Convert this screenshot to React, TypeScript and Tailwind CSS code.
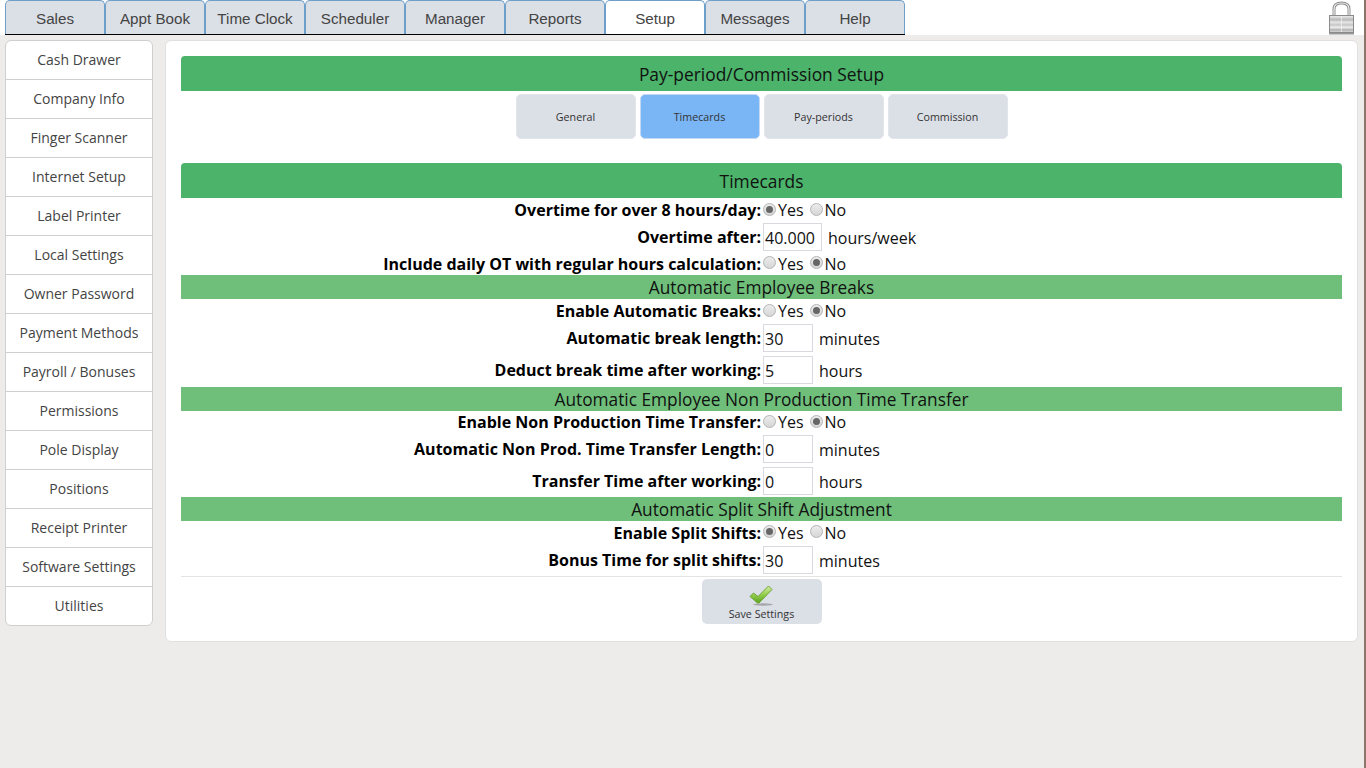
const tabs = ["Sales", "Appt Book", "Time Clock", "Scheduler", "Manager", "Reports", "Setup", "Messages", "Help"];
const sideItems = [
  "Cash Drawer", "Company Info", "Finger Scanner", "Internet Setup", "Label Printer", "Local Settings", "Owner Password",
  "Payment Methods", "Payroll / Bonuses", "Permissions", "Pole Display", "Positions", "Receipt Printer", "Software Settings", "Utilities",
];
const subTabs = ["General", "Timecards", "Pay-periods", "Commission"];

function Radio({ on }: { on: boolean }) {
  return (
    <span className="-mt-[2px] flex h-[13px] w-[13px] items-center justify-center rounded-full border border-[#b4b4b4] bg-gradient-to-b from-[#ececec] to-[#d6d6d6]">
      {on && <span className="h-[7px] w-[7px] rounded-full bg-[#666666]" />}
    </span>
  );
}

function YesNo({ label, yes, h }: { label: string; yes: boolean; h: string }) {
  return (
    <div className={`flex items-center ${h}`}>
      <div className="w-[580px] text-right font-bold text-black">{label}:</div>
      <div className="ml-[2px] flex items-center text-[#111]">
        <Radio on={yes} />
        <span className="ml-[2px]">Yes</span>
        <span className="ml-[6px] flex items-center"><Radio on={!yes} /></span>
        <span className="ml-[2px]">No</span>
      </div>
    </div>
  );
}

function InputRow({ label, value, unit, wide, h }: { label: string; value: string; unit: string; wide?: boolean; h: string }) {
  return (
    <div className={`flex items-center ${h}`}>
      <div className="w-[580px] text-right font-bold text-black">{label}:</div>
      <div className={`ml-[2px] flex h-[28px] items-center border border-[#d8d8de] pl-[1px] pt-[1px] text-[#111] ${wide ? "w-[59px]" : "w-[50px]"}`}>{value}</div>
      <span className="ml-[6px] pt-[1px] text-[#111]">{unit}</span>
    </div>
  );
}

function SubHeader({ title }: { title: string }) {
  return <div className="flex h-[24px] items-center justify-center bg-[#6fbf7b] pt-[1px] text-[17.3px] text-[#111]">{title}</div>;
}

function MainHeader({ title }: { title: string }) {
  return <div className="flex h-[35px] items-center justify-center rounded-t-[4px] bg-[#4bb36a] pt-[1px] text-[17.4px] text-[#111]">{title}</div>;
}

function Lock() {
  return (
    <svg width="26" height="34" viewBox="0 0 26 34">
      <defs>
        <linearGradient id="lockBody" x1="0" y1="0" x2="0" y2="1">
          <stop offset="0" stopColor="#f0f0f0" />
          <stop offset="0.25" stopColor="#b9b9b9" />
          <stop offset="0.4" stopColor="#e6e6e6" />
          <stop offset="0.55" stopColor="#c6c6c6" />
          <stop offset="0.7" stopColor="#ececec" />
          <stop offset="0.85" stopColor="#b0b0b0" />
          <stop offset="1" stopColor="#e0e0e0" />
        </linearGradient>
      </defs>
      <path d="M5 15V8c0-4 3-6 7.500-6s7.500 2 7.500 6v7" fill="none" stroke="#8e8e8e" strokeWidth="3" />
      <path d="M5 15V8c0-4 3-6 7.500-6s7.500 2 7.500 6v7" fill="none" stroke="#ececec" strokeWidth="1.200" />
      <rect x="0.5" y="14.500" width="24" height="17" fill="url(#lockBody)" stroke="#8a8a8a" />
      <rect x="12" y="15" width="1" height="16" fill="#f4f4f4" opacity="0.7" />
      <rect x="0" y="32" width="25" height="1.500" fill="#555" opacity="0.6" />
    </svg>
  );
}

function Check() {
  return (
    <svg width="25" height="21" viewBox="0 0 25 21">
      <defs>
        <linearGradient id="checkFill" x1="0" y1="0" x2="0" y2="1">
          <stop offset="0" stopColor="#d6eda0" />
          <stop offset="0.55" stopColor="#8fcb46" />
          <stop offset="1" stopColor="#5da322" />
        </linearGradient>
      </defs>
      <ellipse cx="14" cy="19.500" rx="10" ry="1.200" fill="#777" opacity="0.55" />
      <path d="M1 11.500 4.500 8l4.500 3.500L19.500 1l3.500 3.500-13 13.500H8.500z" fill="url(#checkFill)" stroke="#6ea43c" strokeWidth="1" strokeLinejoin="round" />
    </svg>
  );
}

export default function App() {
  return (
    <div className="flex min-h-[768px] bg-[#edecea] font-['Open_Sans',sans-serif] text-[16px]">
      <div className="flex-1">
        <div className="flex h-[35px] items-start justify-between bg-white pl-[5px] pr-[9px]">
          <div className="flex h-[35px] border-b border-black font-['Liberation_Sans',sans-serif] text-[15.2px]">
            {tabs.map((t) => (
              <div
                key={t}
                className={`flex w-[100px] items-center justify-center rounded-t-[5px] border border-b-0 border-[#6e9fc9] pt-[3px] text-[#444] ${t === "Setup" ? "bg-white" : "bg-[#dbdfe6]"}`}
              >
                {t}
              </div>
            ))}
          </div>
          <div className="pt-[1px]"><Lock /></div>
        </div>
        <div className="flex items-start gap-[12px] pl-[5px] pr-[6px] pt-[5px]">
          <div className="w-[148px] overflow-hidden rounded-[6px] border border-[#cfcfcf] bg-white text-[14px] text-[#444]">
            {sideItems.map((s, i) => (
              <div
                key={s}
                className={`flex items-center justify-center pb-[2px] ${i < sideItems.length - 1 ? "h-[39px] border-b border-[#cfcfcf]" : "h-[38px]"}`}
              >
                {s}
              </div>
            ))}
          </div>
          <div className="h-[602px] flex-1 rounded-[6px] border border-[#e0e0e0] bg-white px-[15px] pt-[15px]">
            <MainHeader title="Pay-period/Commission Setup" />
            <div className="mt-[3px] flex justify-center gap-[4px] text-[10.7px] text-[#333]">
              {subTabs.map((t) => (
                <div
                  key={t}
                  className={`flex h-[45px] w-[120px] items-center justify-center rounded-[5px] border pt-[1px] ${t === "Timecards" ? "border-[#c4daf2] bg-[#7ab6f5]" : "border-[#e2e5ea] bg-[#dbdfe6]"}`}
                >
                  {t}
                </div>
              ))}
            </div>
            <div className="mt-[24px]"><MainHeader title="Timecards" /></div>
            <YesNo label="Overtime for over 8 hours/day" yes h="h-[24px]" />
            <InputRow label="Overtime after" value="40.000" unit="hours/week" wide h="h-[30px]" />
            <YesNo label="Include daily OT with regular hours calculation" yes={false} h="h-[23px]" />
            <SubHeader title="Automatic Employee Breaks" />
            <YesNo label="Enable Automatic Breaks" yes={false} h="h-[24px]" />
            <InputRow label="Automatic break length" value="30" unit="minutes" h="h-[30px]" />
            <InputRow label="Deduct break time after working" value="5" unit="hours" h="h-[34px]" />
            <SubHeader title="Automatic Employee Non Production Time Transfer" />
            <YesNo label="Enable Non Production Time Transfer" yes={false} h="h-[22px]" />
            <InputRow label="Automatic Non Prod. Time Transfer Length" value="0" unit="minutes" h="h-[32px]" />
            <InputRow label="Transfer Time after working" value="0" unit="hours" h="h-[32px]" />
            <SubHeader title="Automatic Split Shift Adjustment" />
            <YesNo label="Enable Split Shifts" yes h="h-[23px]" />
            <InputRow label="Bonus Time for split shifts" value="30" unit="minutes" h="h-[32px]" />
            <div className="flex justify-center border-t border-[#e4e4e4] pt-[2px]">
              <div className="flex h-[45px] w-[120px] flex-col items-center rounded-[5px] bg-[#dbdfe6] pt-[6px] text-[10.7px] text-[#333]">
                <Check />
                <span className="mt-[1px] leading-[14px]">Save Settings</span>
              </div>
            </div>
          </div>
        </div>
      </div>
      <div className="w-[2px] bg-[#8c7468]" />
    </div>
  );
}
